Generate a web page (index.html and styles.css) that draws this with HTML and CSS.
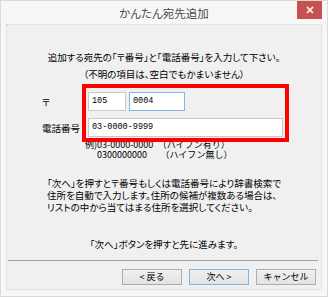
FILE: index.html
```html
<!DOCTYPE html>
<html lang="ja">
<head>
    <meta charset="UTF-8">
    <meta name="viewport" content="width=device-width, initial-scale=1.0">
    <title>かんたん宛先追加</title>
    <link rel="stylesheet" href="styles.css">
</head>
<body>
    <div class="window">
        <div class="titlebar">
            <span></span>
            <div class="title">かんたん宛先追加</div>
            <div class="close">
                <svg width="8" height="8" viewBox="0 0 8 8">
                    <path d="M1 1L7 7M7 1L1 7" stroke="#fff" stroke-width="1.6" fill="none"/>
                </svg>
            </div>
        </div>

        <div class="panel">
            <p class="lead">追加する宛先の「〒番号」と「電話番号」を入力して下さい。</p>
            <p class="lead note">（不明の項目は、空白でもかまいません）</p>

            <div class="form">
                <div class="row">
                    <div class="label">〒</div>
                    <div class="field zip1">105</div>
                    <div class="field zip2 active">0004</div>
                </div>
                <div class="row phone-row">
                    <div class="label">電話番号</div>
                    <div class="field phone">03-0000-9999</div>
                </div>
                <!-- annotation frame drawn over the inputs -->
                <div class="highlight"></div>
            </div>

            <div class="example">
                <div class="ex1">例)03-0000-0000　（ハイフン有り）</div>
                <div class="ex2">0300000000　　（ハイフン無し）</div>
            </div>

            <p class="help">
                「次へ」を押すと〒番号もしくは電話番号により辞書検索で<br>
                住所を自動で入力します。住所の候補が複数ある場合は、<br>
                リストの中から当てはまる住所を選択してください。
            </p>

            <p class="lead next">「次へ」ボタンを押すと先に進みます。</p>

            <div class="separator"></div>

            <div class="buttons">
                <button class="btn">&lt; 戻る</button>
                <button class="btn default">次へ &gt;</button>
                <button class="btn">キャンセル</button>
            </div>
        </div>
    </div>
</body>
</html>
```

FILE: styles.css
```css
* {
    margin: 0;
    padding: 0;
    box-sizing: border-box;
}

body {
    font-family: "Noto Sans CJK JP", sans-serif;
    font-size: 9.5px;
    color: #000;
    background: #f7f7f7;
    width: 328px;
    height: 297px;
    overflow: hidden;
}

.window {
    width: 328px;
    height: 297px;
    background: #f7f7f7;
    border: 1px solid #dadada;
    display: flex;
    flex-direction: column;
}

.titlebar {
    height: 23px;
    display: grid;
    grid-template-columns: 1fr auto 1fr;
    align-items: start;
}

.title {
    font-size: 11.5px;
    line-height: 24px;
    color: #4a4a4a;
    font-feature-settings: "palt";
}

.close {
    justify-self: end;
    margin-right: 5px;
    width: 25px;
    height: 18px;
    background: #c75050;
    display: flex;
    align-items: center;
    justify-content: center;
}

.panel {
    margin: 0 5px 6px 5px;
    height: 266px;
    background: #f0f0f0;
    border: 1px dotted #d4d4d4;
    padding-top: 26px;
    display: flex;
    flex-direction: column;
    font-feature-settings: "palt";
}

.lead {
    text-align: center;
    line-height: 12px;
    white-space: nowrap;
}

.note {
    margin-top: 5px;
}

.form {
    position: relative;
    margin-top: 12px;
    padding-left: 35px;
    display: flex;
    flex-direction: column;
    gap: 7px;
}

.row {
    display: flex;
    align-items: center;
    height: 19px;
}

.label {
    width: 46px;
    white-space: nowrap;
}

.field {
    height: 19px;
    background: #fff;
    border: 1px solid #c9c9c9;
    font-family: "Liberation Mono", monospace;
    font-size: 8.5px;
    line-height: 17px;
    padding-left: 3px;
}

.zip1 {
    width: 38px;
}

.zip2 {
    width: 56px;
    margin-left: 3px;
}

.active {
    border-color: #7eb4ea;
}

.phone {
    width: 195px;
}

.highlight {
    position: absolute;
    left: 75px;
    top: -8px;
    width: 207px;
    height: 58px;
    border: 4px solid #ff0000;
}

.example {
    margin-top: 3px;
    font-size: 9px;
    line-height: 10px;
    white-space: nowrap;
    font-feature-settings: normal;
}

.ex1 {
    padding-left: 78px;
}

.ex2 {
    padding-left: 90px;
}

.help {
    margin-top: 17px;
    padding-left: 40px;
    line-height: 12px;
    white-space: nowrap;
}

.next {
    margin-top: 25px;
}

.separator {
    margin: 10px 3px 0 1px;
    height: 1px;
    background: #a0a0a0;
}

.buttons {
    margin-top: 8px;
    padding-right: 5px;
    display: flex;
    justify-content: flex-end;
    gap: 7px;
}

.btn {
    flex: none;
    width: 60px;
    height: 16px;
    font-family: "Noto Sans CJK JP", sans-serif;
    font-size: 9px;
    line-height: 14px;
    color: #000;
    background: linear-gradient(#f0f0f0, #e3e3e3);
    border: 1px solid #adadad;
}

.default {
    border-color: #7eb4ea;
}
```
